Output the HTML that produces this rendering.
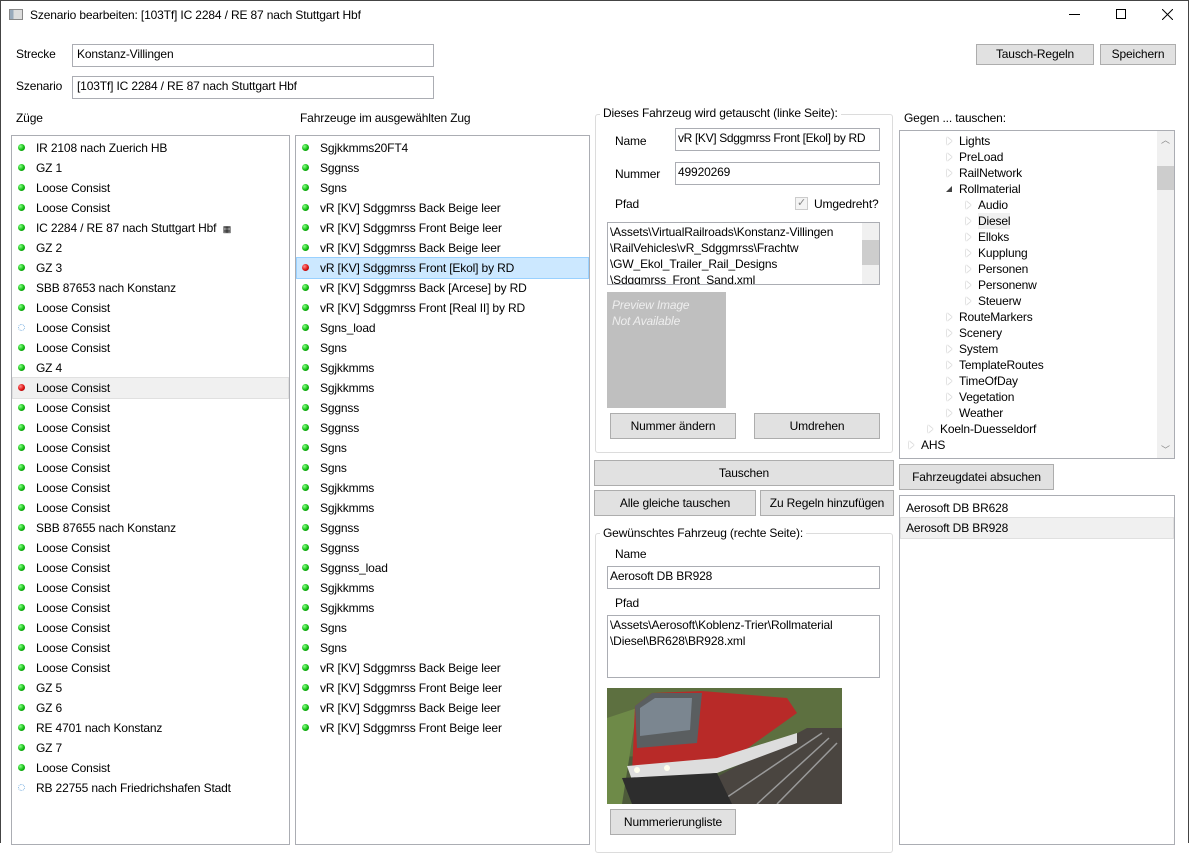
<!DOCTYPE html>
<html><head><meta charset="utf-8"><style>
*{box-sizing:border-box;margin:0;padding:0}
body{width:1189px;height:843px;background:#fff;font:12px "Liberation Sans",sans-serif;letter-spacing:-0.15px;color:#000;position:relative;overflow:hidden}
.a{position:absolute;white-space:nowrap}
.box{position:absolute;border:1px solid #abadb3;background:#fff;white-space:nowrap;overflow:hidden}
.btn{position:absolute;border:1px solid #adadad;background:#e1e1e1;text-align:center;line-height:19px}
.list{position:absolute;border:1px solid #abadb3;background:#fff;overflow:hidden}
.row{height:20px;line-height:20px;position:relative;padding-left:23px;margin:0 1px;white-space:nowrap}
.row i{position:absolute;left:5px;top:6px;width:7px;height:7px;border-radius:50%;background:radial-gradient(circle at 35% 35%,#8f8,#1b1 55%,#070)}
.row i.r{background:radial-gradient(circle at 35% 35%,#f88,#d11 55%,#700)}
.row i.b{background:none;border:1.5px dotted #7ab0e0}
.sel{background:#cce8ff;outline:1px solid #99d1ff}
.gr{background:#f0f0f0;outline:1px solid #e0e0e0}
.grp{position:absolute;border:1px solid #dcdcdc;border-radius:3px}
.lg{position:absolute;background:#fff;padding:0 3px;white-space:nowrap}
.t{position:absolute;white-space:nowrap;height:16px;line-height:16px}
.t:before{content:"";position:absolute;left:-12px;top:4px;border-left:5px solid #fff;border-top:4px solid transparent;border-bottom:4px solid transparent;filter:drop-shadow(0 0 0.6px #777)}
.t.o:before{border:none;left:-13px;top:5px;width:0;height:0;border-right:6px solid #444;border-top:6px solid transparent;filter:none}
</style></head><body>
<div class="a" style="left:0;top:0;width:1189px;height:843px;border:1px solid #444;border-bottom:none"></div>
<div class="a" style="left:9px;top:9px;width:14px;height:11px;background:linear-gradient(90deg,#9ab 0 30%,#ddd 30%);border:1px solid #888"></div>
<div class="a" style="left:30px;top:8px">Szenario bearbeiten: [103Tf] IC 2284 / RE 87 nach Stuttgart Hbf</div>
<div class="a" style="left:1069px;top:14px;width:11px;height:1px;background:#000"></div>
<div class="a" style="left:1116px;top:9px;width:10px;height:10px;border:1px solid #000"></div>
<svg class="a" style="left:1162px;top:9px" width="11" height="11"><path d="M0 0L11 11M11 0L0 11" stroke="#000" stroke-width="1"/></svg>

<div class="a" style="left:16px;top:47px">Strecke</div>
<div class="box" style="left:72px;top:44px;width:362px;height:23px;padding:2px 4px">Konstanz-Villingen</div>
<div class="a" style="left:16px;top:79px">Szenario</div>
<div class="box" style="left:72px;top:76px;width:362px;height:23px;padding:2px 4px">[103Tf] IC 2284 / RE 87 nach Stuttgart Hbf</div>
<div class="btn" style="left:976px;top:44px;width:118px;height:21px">Tausch-Regeln</div>
<div class="btn" style="left:1100px;top:44px;width:76px;height:21px">Speichern</div>

<div class="a" style="left:16px;top:111px">Züge</div>
<div class="a" style="left:300px;top:111px">Fahrzeuge im ausgewählten Zug</div>

<div class="list" style="left:11px;top:135px;width:279px;height:710px;padding-top:2px">
<div class="row"><i></i>IR 2108 nach Zuerich HB</div>
<div class="row"><i></i>GZ 1</div>
<div class="row"><i></i>Loose Consist</div>
<div class="row"><i></i>Loose Consist</div>
<div class="row"><i></i>IC 2284 / RE 87 nach Stuttgart Hbf &nbsp;<span style="font-size:9px">▦</span></div>
<div class="row"><i></i>GZ 2</div>
<div class="row"><i></i>GZ 3</div>
<div class="row"><i></i>SBB 87653 nach Konstanz</div>
<div class="row"><i></i>Loose Consist</div>
<div class="row"><i class="b"></i>Loose Consist</div>
<div class="row"><i></i>Loose Consist</div>
<div class="row"><i></i>GZ 4</div>
<div class="row gr"><i class="r"></i>Loose Consist</div>
<div class="row"><i></i>Loose Consist</div>
<div class="row"><i></i>Loose Consist</div>
<div class="row"><i></i>Loose Consist</div>
<div class="row"><i></i>Loose Consist</div>
<div class="row"><i></i>Loose Consist</div>
<div class="row"><i></i>Loose Consist</div>
<div class="row"><i></i>SBB 87655 nach Konstanz</div>
<div class="row"><i></i>Loose Consist</div>
<div class="row"><i></i>Loose Consist</div>
<div class="row"><i></i>Loose Consist</div>
<div class="row"><i></i>Loose Consist</div>
<div class="row"><i></i>Loose Consist</div>
<div class="row"><i></i>Loose Consist</div>
<div class="row"><i></i>Loose Consist</div>
<div class="row"><i></i>GZ 5</div>
<div class="row"><i></i>GZ 6</div>
<div class="row"><i></i>RE 4701 nach Konstanz</div>
<div class="row"><i></i>GZ 7</div>
<div class="row"><i></i>Loose Consist</div>
<div class="row"><i class="b"></i>RB 22755 nach Friedrichshafen Stadt</div>
</div>

<div class="list" style="left:295px;top:135px;width:295px;height:710px;padding-top:2px">
<div class="row"><i></i>Sgjkkmms20FT4</div>
<div class="row"><i></i>Sggnss</div>
<div class="row"><i></i>Sgns</div>
<div class="row"><i></i>vR [KV] Sdggmrss Back Beige leer</div>
<div class="row"><i></i>vR [KV] Sdggmrss Front Beige leer</div>
<div class="row"><i></i>vR [KV] Sdggmrss Back Beige leer</div>
<div class="row sel"><i class="r"></i>vR [KV] Sdggmrss Front [Ekol] by RD</div>
<div class="row"><i></i>vR [KV] Sdggmrss Back [Arcese] by RD</div>
<div class="row"><i></i>vR [KV] Sdggmrss Front [Real II] by RD</div>
<div class="row"><i></i>Sgns_load</div>
<div class="row"><i></i>Sgns</div>
<div class="row"><i></i>Sgjkkmms</div>
<div class="row"><i></i>Sgjkkmms</div>
<div class="row"><i></i>Sggnss</div>
<div class="row"><i></i>Sggnss</div>
<div class="row"><i></i>Sgns</div>
<div class="row"><i></i>Sgns</div>
<div class="row"><i></i>Sgjkkmms</div>
<div class="row"><i></i>Sgjkkmms</div>
<div class="row"><i></i>Sggnss</div>
<div class="row"><i></i>Sggnss</div>
<div class="row"><i></i>Sggnss_load</div>
<div class="row"><i></i>Sgjkkmms</div>
<div class="row"><i></i>Sgjkkmms</div>
<div class="row"><i></i>Sgns</div>
<div class="row"><i></i>Sgns</div>
<div class="row"><i></i>vR [KV] Sdggmrss Back Beige leer</div>
<div class="row"><i></i>vR [KV] Sdggmrss Front Beige leer</div>
<div class="row"><i></i>vR [KV] Sdggmrss Back Beige leer</div>
<div class="row"><i></i>vR [KV] Sdggmrss Front Beige leer</div>
</div>

<!-- upper group -->
<div class="grp" style="left:595px;top:114px;width:298px;height:339px"></div>
<div class="lg" style="left:600px;top:106px">Dieses Fahrzeug wird getauscht (linke Seite):</div>
<div class="a" style="left:615px;top:134px">Name</div>
<div class="box" style="left:675px;top:128px;width:205px;height:23px;padding:2px 2px;letter-spacing:-0.35px">vR [KV] Sdggmrss Front [Ekol] by RD</div>
<div class="a" style="left:615px;top:167px">Nummer</div>
<div class="box" style="left:675px;top:162px;width:205px;height:23px;padding:2px 2px">49920269</div>
<div class="a" style="left:615px;top:197px">Pfad</div>
<div class="a" style="left:795px;top:197px;width:13px;height:13px;border:1px solid #ccc;background:#f4f4f4;color:#888;font-size:11px;line-height:11px;text-align:center">✓</div>
<div class="a" style="left:814px;top:197px">Umgedreht?</div>
<div class="box" style="left:607px;top:222px;width:273px;height:63px;padding:1px 2px;line-height:16px;overflow:hidden">\Assets\VirtualRailroads\Konstanz-Villingen<br>\RailVehicles\vR_Sdggmrss\Frachtw<br>\GW_Ekol_Trailer_Rail_Designs<br>\Sdggmrss_Front_Sand.xml</div>
<div class="a" style="left:862px;top:223px;width:17px;height:61px;background:#f0f0f0"><div style="position:absolute;top:17px;width:17px;height:25px;background:#cdcdcd"></div></div>
<div class="a" style="left:607px;top:292px;width:119px;height:116px;background:#bfbfbf;color:#eee;font-style:italic;padding:5px;line-height:16px">Preview Image<br>Not Available</div>
<div class="btn" style="left:610px;top:413px;width:126px;height:26px;line-height:24px">Nummer ändern</div>
<div class="btn" style="left:754px;top:413px;width:126px;height:26px;line-height:24px">Umdrehen</div>

<div class="btn" style="left:594px;top:460px;width:300px;height:26px;line-height:24px">Tauschen</div>
<div class="btn" style="left:594px;top:490px;width:162px;height:26px;line-height:24px">Alle gleiche tauschen</div>
<div class="btn" style="left:760px;top:490px;width:134px;height:26px;line-height:24px">Zu Regeln hinzufügen</div>

<!-- lower group -->
<div class="grp" style="left:595px;top:533px;width:298px;height:320px"></div>
<div class="lg" style="left:600px;top:526px">Gewünschtes Fahrzeug (rechte Seite):</div>
<div class="a" style="left:615px;top:547px">Name</div>
<div class="box" style="left:607px;top:566px;width:273px;height:23px;padding:2px 2px">Aerosoft DB BR928</div>
<div class="a" style="left:615px;top:596px">Pfad</div>
<div class="box" style="left:607px;top:615px;width:273px;height:63px;padding:1px 2px;line-height:16px">\Assets\Aerosoft\Koblenz-Trier\Rollmaterial<br>\Diesel\BR628\BR928.xml</div>
<svg class="a" style="left:607px;top:688px" width="235" height="116" viewBox="0 0 235 116">
<rect width="235" height="116" fill="#4d5a3a"/>
<path d="M0 0H235V40L200 45L150 60L0 70Z" fill="#5d7040"/>
<path d="M0 30L30 20L15 116H0Z" fill="#6e8a48"/>
<path d="M60 116L200 40H235V116Z" fill="#4a4540"/>
<path d="M110 116L215 45M150 116L222 50M170 116L230 55" stroke="#999" stroke-width="1.5"/>
<path d="M28 18L45 5L95 3L180 10L190 25L120 75L60 90L25 85Z" fill="#b82a28"/>
<path d="M28 18L45 5L95 5L90 55L30 60Z" fill="#5a5e60"/>
<path d="M33 20L48 10L85 10L83 42L33 48Z" fill="#7b8690"/>
<path d="M20 78L110 70L190 45V55L110 85L25 92Z" fill="#ddd"/>
<path d="M15 90L110 85L125 116H25Z" fill="#2d2d2d"/>
<circle cx="60" cy="80" r="3" fill="#ffe"/><circle cx="30" cy="82" r="3" fill="#ffe"/>
</svg>
<div class="btn" style="left:610px;top:809px;width:126px;height:26px;line-height:24px">Nummerierungliste</div>

<!-- right -->
<div class="a" style="left:904px;top:111px">Gegen ... tauschen:</div>
<div class="box" style="left:899px;top:130px;width:276px;height:329px;overflow:hidden">
<div class="a" style="right:0;top:0;width:17px;height:327px;background:#f0f0f0"><div style="position:absolute;top:35px;width:17px;height:24px;background:#cdcdcd"></div><div style="position:absolute;top:2px;left:4px;font-size:9px;color:#888">︿</div><div style="position:absolute;bottom:2px;left:4px;font-size:9px;color:#888">﹀</div></div>
<div class="t" style="left:59px;top:2px">Lights</div>
<div class="t" style="left:59px;top:18px">PreLoad</div>
<div class="t" style="left:59px;top:34px">RailNetwork</div>
<div class="t o" style="left:59px;top:50px">Rollmaterial</div>
<div class="t" style="left:78px;top:66px">Audio</div>
<div class="t" style="left:78px;top:82px;background:#f0f0f0">Diesel</div>
<div class="t" style="left:78px;top:98px">Elloks</div>
<div class="t" style="left:78px;top:114px">Kupplung</div>
<div class="t" style="left:78px;top:130px">Personen</div>
<div class="t" style="left:78px;top:146px">Personenw</div>
<div class="t" style="left:78px;top:162px">Steuerw</div>
<div class="t" style="left:59px;top:178px">RouteMarkers</div>
<div class="t" style="left:59px;top:194px">Scenery</div>
<div class="t" style="left:59px;top:210px">System</div>
<div class="t" style="left:59px;top:226px">TemplateRoutes</div>
<div class="t" style="left:59px;top:242px">TimeOfDay</div>
<div class="t" style="left:59px;top:258px">Vegetation</div>
<div class="t" style="left:59px;top:274px">Weather</div>
<div class="t" style="left:40px;top:290px">Koeln-Duesseldorf</div>
<div class="t" style="left:21px;top:306px">AHS</div>
</div>
<div class="btn" style="left:899px;top:464px;width:155px;height:26px;line-height:24px">Fahrzeugdatei absuchen</div>
<div class="list" style="left:899px;top:495px;width:276px;height:350px;padding-top:2px">
<div class="row" style="padding-left:5px">Aerosoft DB BR628</div>
<div class="row gr" style="padding-left:5px">Aerosoft DB BR928</div>
</div>
</body></html>
